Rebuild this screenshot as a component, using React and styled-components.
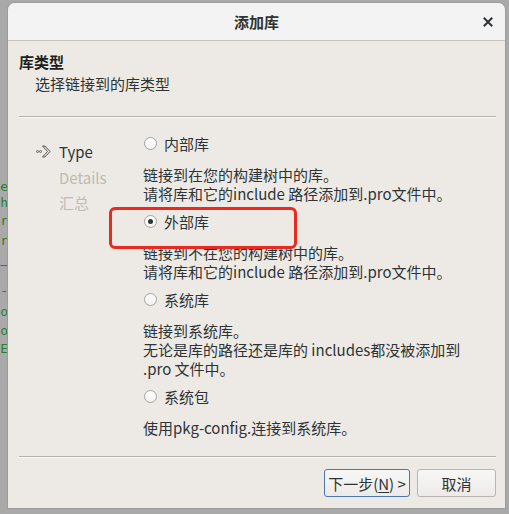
import React from "react";
import styled, { createGlobalStyle } from "styled-components";

const Global = createGlobalStyle`
  html, body { margin: 0; padding: 0; }
  body {
    background: #a9a9a9;
    width: 509px;
    height: 514px;
    overflow: hidden;
    font-family: "Noto Sans CJK SC", "Noto Sans", sans-serif;
  }
`;

const Page = styled.div`
  display: flex;
  width: 509px;
  height: 514px;
  background: #a9a9a9;
`;

const BackStrip = styled.div`
  width: 8px;
  flex: none;
  overflow: hidden;
  display: flex;
  flex-direction: column;
  align-items: flex-end;
  padding-top: 180px;
  box-sizing: border-box;
`;

const BackLine = styled.div`
  font-family: "DejaVu Sans Mono", monospace;
  font-size: 13px;
  line-height: 14px;
  white-space: nowrap;
  color: ${(p) => (p.$dark ? "#222" : "#2f7d2f")};
  margin-top: ${(p) => p.$gap}px;
`;

const Dialog = styled.div`
  margin-top: 3px;
  width: 497px;
  height: 505px;
  flex: none;
  background: #edeae5;
  border-radius: 7px 7px 0 0;
  box-shadow: 0 0 0 1px #9c9c9c;
  display: flex;
  flex-direction: column;
  overflow: hidden;
  color: #2e3436;
`;

const TitleBar = styled.div`
  height: 37px;
  flex: none;
  background: #f3f3f3;
  border-bottom: 1px solid #c7c4c0;
  display: grid;
  grid-template-columns: 1fr auto 1fr;
  align-items: center;
`;

const Title = styled.div`
  grid-column: 2;
  font-size: 15px;
  font-weight: 700;
  color: #2e3436;
  line-height: 20px;
`;

const CloseBtn = styled.div`
  grid-column: 3;
  justify-self: end;
  margin-right: 12px;
  width: 10px;
  height: 10px;
  display: flex;
`;

const Body = styled.div`
  flex: 1;
  display: flex;
  flex-direction: column;
  padding: 0 9px 0 11px;
`;

const Header = styled.div`
  padding-top: 11px;
  display: flex;
  flex-direction: column;
`;

const HeadTitle = styled.div`
  font-size: 15px;
  font-weight: 700;
  line-height: 20px;
  color: #1e1e1e;
`;

const HeadSub = styled.div`
  font-size: 15px;
  line-height: 20px;
  padding-left: 16px;
  margin-top: 2px;
  color: #2e3436;
`;

const Separator = styled.div`
  height: 1px;
  background: #b3b1ae;
  border-bottom: 1px solid #fbfaf9;
  margin-top: ${(p) => p.$top}px;
`;

const Content = styled.div`
  height: 338px;
  display: flex;
  position: relative;
`;

const Nav = styled.div`
  width: 124px;
  flex: none;
  box-sizing: border-box;
  padding: 21px 0 0 17px;
  display: flex;
  flex-direction: column;
`;

const NavItem = styled.div`
  display: grid;
  grid-template-columns: 23px auto;
  align-items: center;
  height: 25.5px;
  font-size: 15px;
  color: ${(p) => (p.$active ? "#2e3436" : "#bdb9b4")};
`;

const Options = styled.div`
  flex: 1;
  padding-top: 15px;
  display: flex;
  flex-direction: column;
`;

const OptionRow = styled.label`
  display: flex;
  align-items: center;
  height: 20px;
  font-size: 15px;
  color: #2e3436;
  margin-bottom: 12px;
`;

const Radio = styled.span`
  width: 13px;
  height: 13px;
  box-sizing: border-box;
  border-radius: 50%;
  border: 1px solid #a6a39f;
  background: linear-gradient(#ffffff, #f4f3f2);
  margin: 0 7px 0 1px;
  display: flex;
  align-items: center;
  justify-content: center;
  &::after {
    content: "";
    width: 5px;
    height: 5px;
    border-radius: 50%;
    background: ${(p) => (p.$checked ? "#2e3436" : "transparent")};
  }
`;

const Desc = styled.div`
  font-size: 15px;
  line-height: 19px;
  height: ${(p) => p.$lines * 19}px;
  color: #2e3436;
  margin-bottom: 8px;
  white-space: pre-line;
`;

const Highlight = styled.div`
  position: absolute;
  left: 90px;
  top: 89px;
  width: 188px;
  height: 42px;
  box-sizing: border-box;
  border: 3px solid #ea2a1e;
  border-radius: 6px;
  pointer-events: none;
`;

const Footer = styled.div`
  display: flex;
  justify-content: flex-end;
  gap: 7px;
  padding-top: 11px;
`;

const Button = styled.button`
  height: 28px;
  width: ${(p) => p.$w}px;
  box-sizing: border-box;
  border-radius: 3px;
  border: 1px solid ${(p) => (p.$focus ? "#4d79a6" : "#b9b6b2")};
  background: linear-gradient(#f7f7f6, #ecebe9);
  font-family: "Noto Sans CJK SC", "Noto Sans", sans-serif;
  font-size: 15px;
  color: #2e3436;
  padding: 0;
  display: flex;
  align-items: center;
  justify-content: center;
  u { text-decoration: underline; text-underline-offset: 2px; }
`;

const ChevronIcon = () => (
  <svg width="15" height="15" viewBox="0 0 15 15">
    <circle cx="1.5" cy="7.5" r="1" fill="none" stroke="#555" strokeWidth="0.9" />
    <circle cx="4.5" cy="7.5" r="1" fill="none" stroke="#555" strokeWidth="0.9" />
    <path d="M6.5 2 L9 2 L14 7.5 L9 13 L6.5 13 L11.5 7.5 Z" fill="none" stroke="#555" strokeWidth="1" strokeLinejoin="round" />
  </svg>
);

const CloseIcon = () => (
  <svg width="10" height="10" viewBox="0 0 10 10">
    <path d="M1.5 1.5 L8.5 8.5 M8.5 1.5 L1.5 8.5" stroke="#2e3436" strokeWidth="2" strokeLinecap="square" />
  </svg>
);

const backLines = [
  { t: "name", gap: 0 },
  { t: "tch", gap: 2 },
  { t: "ner", gap: 4 },
  { t: "ter", gap: 6 },
  { t: "po_", gap: 4, dark: true },
  { t: "-", gap: 18 },
  { t: "aco", gap: 7 },
  { t: "no", gap: 5 },
  { t: "IDE", gap: 4 },
];

const options = [
  { label: "内部库", checked: false, desc: "链接到在您的构建树中的库。\n请将库和它的include 路径添加到.pro文件中。" },
  { label: "外部库", checked: true, desc: "链接到不在您的构建树中的库。\n请将库和它的include 路径添加到.pro文件中。" },
  { label: "系统库", checked: false, desc: "链接到系统库。\n无论是库的路径还是库的 includes都没被添加到\n.pro 文件中。" },
  { label: "系统包", checked: false, desc: "使用pkg-config.连接到系统库。" },
];

export default function App() {
  return (
    <>
      <Global />
      <Page>
        <BackStrip>
          {backLines.map((l, i) => (
            <BackLine key={i} $gap={l.gap} $dark={l.dark}>{l.t}</BackLine>
          ))}
        </BackStrip>
        <Dialog>
          <TitleBar>
            <Title>添加库</Title>
            <CloseBtn><CloseIcon /></CloseBtn>
          </TitleBar>
          <Body>
            <Header>
              <HeadTitle>库类型</HeadTitle>
              <HeadSub>选择链接到的库类型</HeadSub>
            </Header>
            <Separator $top={22} />
            <Content>
              <Nav>
                <NavItem $active><ChevronIcon /><span>Type</span></NavItem>
                <NavItem><span /><span>Details</span></NavItem>
                <NavItem><span /><span>汇总</span></NavItem>
              </Nav>
              <Options>
                {options.map((o) => (
                  <React.Fragment key={o.label}>
                    <OptionRow>
                      <Radio $checked={o.checked} />
                      {o.label}
                    </OptionRow>
                    <Desc $lines={o.desc.split("\n").length}>{o.desc}</Desc>
                  </React.Fragment>
                ))}
              </Options>
              <Highlight />
            </Content>
            <Separator $top={0} />
            <Footer>
              <Button $w={86} $focus>下一步(<u>N</u>) &gt;</Button>
              <Button $w={79}>取消</Button>
            </Footer>
          </Body>
        </Dialog>
      </Page>
    </>
  );
}
